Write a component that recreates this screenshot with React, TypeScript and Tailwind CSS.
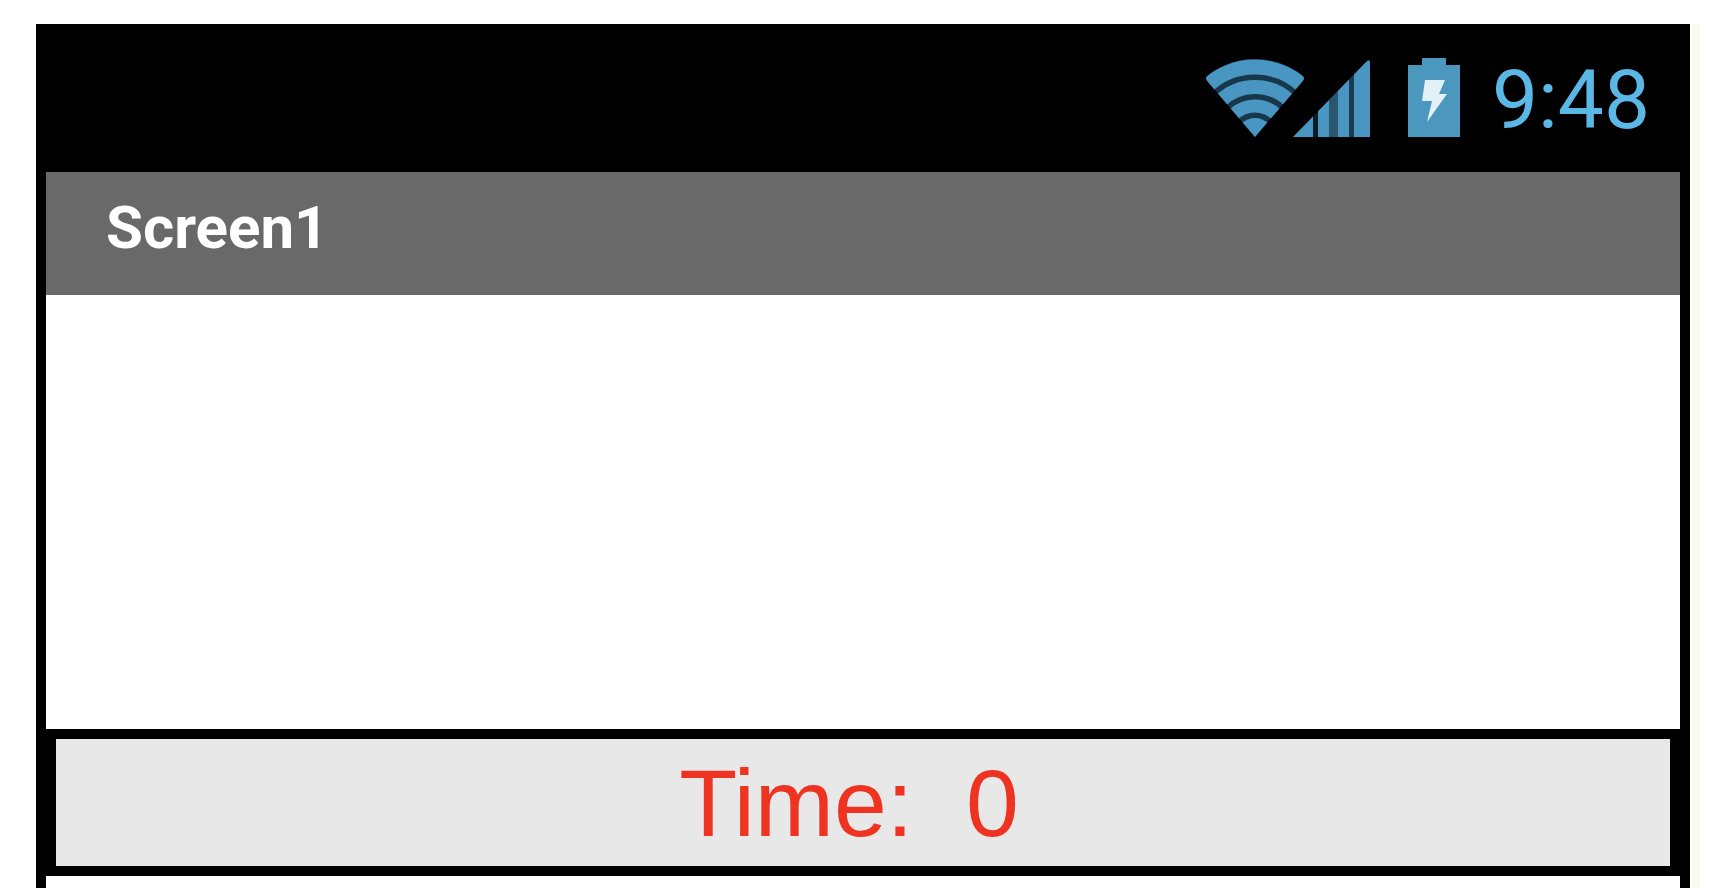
function WifiIcon() {
  return (
    <svg className="h-20 w-[100px]" viewBox="0 0 100 80" role="img" aria-label="Wi-Fi">
      <defs>
        <clipPath id="wedge">
          <path d="M50 79 L3 24 Q-1 20 3 17 L20 0 H80 L97 17 Q101 20 97 24 Z" />
        </clipPath>
      </defs>
      <g clipPath="url(#wedge)" fill="none" stroke="#4896c1">
        <circle cx="50" cy="79" r="78" fill="#17384a" stroke="none" />
        <circle cx="50" cy="79" r="70" strokeWidth="15" />
        <circle cx="50" cy="79" r="50" strokeWidth="14" />
        <circle cx="50" cy="79" r="31" strokeWidth="13" />
        <circle cx="50" cy="79" r="19" fill="#4896c1" stroke="none" />
      </g>
    </svg>
  );
}

function SignalIcon() {
  return (
    <svg className="-ml-3 h-20 w-[77px]" viewBox="0 0 77 80" role="img" aria-label="Mobile signal">
      <defs>
        <clipPath id="slope">
          <path d="M0 79 L73 4 Q77 0 77 5 V79 Z" />
        </clipPath>
      </defs>
      <g clipPath="url(#slope)">
        <rect width="77" height="80" fill="#0c1c26" />
        <rect x="36" width="9" height="80" fill="#2a566d" />
        <rect x="56" width="5" height="80" fill="#1b3c4e" />
        <g fill="#4896c1">
          <rect x="0" width="20" height="80" />
          <rect x="25" width="11" height="80" />
          <rect x="45" width="11" height="80" />
          <rect x="61" width="16" height="80" />
        </g>
      </g>
    </svg>
  );
}

function BatteryIcon() {
  return (
    <svg className="ml-[38px] h-20 w-[52px]" viewBox="0 0 52 80" role="img" aria-label="Battery charging">
      <path d="M0 7 H14 V1 Q14 -1 16 -1 H36 Q38 -1 38 1 V7 H52 V79 H0 Z" fill="#4b97bd" />
      <path d="M17 22 H37 L31 36 H39 L19 64 L24 43 H14 Z" fill="#e3f0f6" />
    </svg>
  );
}

export default function App() {
  return (
    <div className="flex min-h-screen flex-col bg-white pt-6 pr-4 pl-9 font-[Roboto,sans-serif]">
      <div className="flex flex-1 border-r-8 border-[#f8f9f1]">
        <main className="mr-0.5 flex flex-1 flex-col border-x-10 border-black">
          <header>
            <div className="flex h-[148px] items-center justify-end bg-black pr-[30px]">
              <WifiIcon />
              <SignalIcon />
              <BatteryIcon />
              <time className="ml-8 pt-1 text-[82px] leading-[80px] text-[#5ab7e6]">9:48</time>
            </div>
            <h1 className="h-[123px] bg-[#696969] pt-4 pl-[60px] text-[60px] leading-[80px] font-bold text-white">
              Screen1
            </h1>
          </header>
          <div className="h-[434px] bg-white" />
          <section className="flex h-[147px] items-center justify-center border-10 border-black bg-[#e8e8e8] pr-7">
            <p className="font-['Liberation_Sans',Arial,sans-serif] text-[95px] leading-[108px] whitespace-pre text-[#ee3322]">
              Time:  0
            </p>
          </section>
          <div className="flex-1 bg-white" />
        </main>
      </div>
    </div>
  );
}
